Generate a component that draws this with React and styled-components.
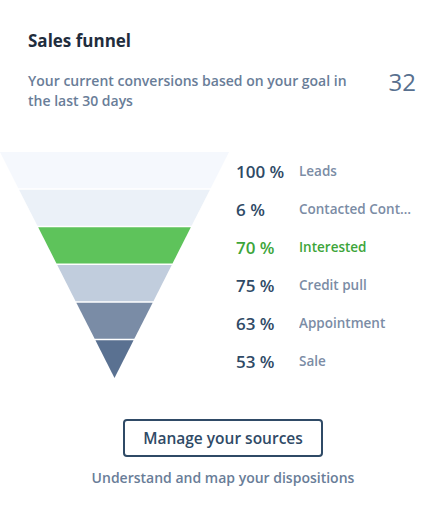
import React from 'react';
import styled, { createGlobalStyle } from 'styled-components';

const GlobalStyle = createGlobalStyle`
  body {
    margin: 0;
    background: #ffffff;
    font-family: 'Open Sans', 'Lato', sans-serif;
  }
`;

const Card = styled.div`
  width: 446px;
  height: 506px;
  background: #ffffff;
  box-sizing: border-box;
  padding-top: 29px;
`;

const Header = styled.div`
  padding: 0 28px 0 28px;
`;

const Title = styled.h2`
  margin: 0;
  font-size: 17px;
  font-weight: 700;
  color: #1f2d3d;
  line-height: 24px;
`;

const SummaryRow = styled.div`
  display: flex;
  justify-content: space-between;
  align-items: flex-start;
  margin-top: 18px;
`;

const Summary = styled.p`
  margin: 0;
  width: 332px;
  font-size: 14px;
  font-weight: 600;
  line-height: 20px;
  color: #697d98;
`;

const Total = styled.span`
  font-size: 24px;
  font-weight: 400;
  color: #58708f;
  line-height: 24px;
  margin-top: -1px;
  margin-right: 2px;
`;

const FunnelRow = styled.div`
  display: flex;
  align-items: flex-start;
  margin-top: 41px;
`;

const Legend = styled.ul`
  list-style: none;
  margin: 0 0 0 7px;
  padding: 0;
`;

const LegendItem = styled.li`
  display: flex;
  align-items: center;
  height: 38px;
  color: ${(p) => (p.$active ? '#3da53a' : '#2f4a66')};
`;

const Percent = styled.span`
  width: 63px;
  font-size: 17px;
  font-weight: 600;
`;

const Stage = styled.span`
  width: 118px;
  font-size: 13.5px;
  font-weight: 600;
  white-space: nowrap;
  overflow: hidden;
  text-overflow: ellipsis;
  color: ${(p) => (p.$active ? '#3da53a' : '#7b8ca5')};
`;

const Footer = styled.div`
  display: flex;
  flex-direction: column;
  align-items: center;
  margin-top: 39px;
`;

const ManageButton = styled.button`
  width: 200px;
  height: 38px;
  background: #ffffff;
  border: 2px solid #2f4a66;
  border-radius: 4px;
  font-family: inherit;
  font-size: 15.5px;
  font-weight: 600;
  color: #2f4a66;
  cursor: pointer;
`;

const Hint = styled.p`
  margin: 11px 0 0 0;
  font-size: 14px;
  font-weight: 600;
  color: #697d98;
`;

const stages = [
  { value: '100 %', name: 'Leads', color: '#f5f8fd' },
  { value: '6 %', name: 'Contacted Contacts', color: '#ebf1f8' },
  { value: '70 %', name: 'Interested', color: '#5ec35b', active: true },
  { value: '75 %', name: 'Credit pull', color: '#c1cddd' },
  { value: '63 %', name: 'Appointment', color: '#7a8ca6' },
  { value: '53 %', name: 'Sale', color: '#5a7191' },
];

const FW = 229;
const FH = 226;
const STEP = FH / stages.length;

// half width of the funnel at height y
const half = (y) => (FW / 2) * (1 - y / FH);

const Funnel = () => (
  <svg width={FW} height={FH} viewBox={`0 0 ${FW} ${FH}`}>
    {stages.map((s, i) => {
      const top = i * STEP;
      const bottom = i === stages.length - 1 ? FH : top + STEP - 1.5;
      const c = FW / 2;
      const pts = [
        [c - half(top), top],
        [c + half(top), top],
        [c + half(bottom), bottom],
        [c - half(bottom), bottom],
      ]
        .map((p) => p.join(','))
        .join(' ');
      return <polygon key={i} points={pts} fill={s.color} />;
    })}
  </svg>
);

export default function App() {
  return (
    <Card>
      <GlobalStyle />
      <Header>
        <Title>Sales funnel</Title>
        <SummaryRow>
          <Summary>
            Your current conversions based on your goal in the last 30 days
          </Summary>
          <Total>32</Total>
        </SummaryRow>
      </Header>
      <FunnelRow>
        <Funnel />
        <Legend>
          {stages.map((s) => (
            <LegendItem key={s.name} $active={s.active}>
              <Percent>{s.value}</Percent>
              <Stage $active={s.active}>{s.name}</Stage>
            </LegendItem>
          ))}
        </Legend>
      </FunnelRow>
      <Footer>
        <ManageButton>Manage your sources</ManageButton>
        <Hint>Understand and map your dispositions</Hint>
      </Footer>
    </Card>
  );
}
